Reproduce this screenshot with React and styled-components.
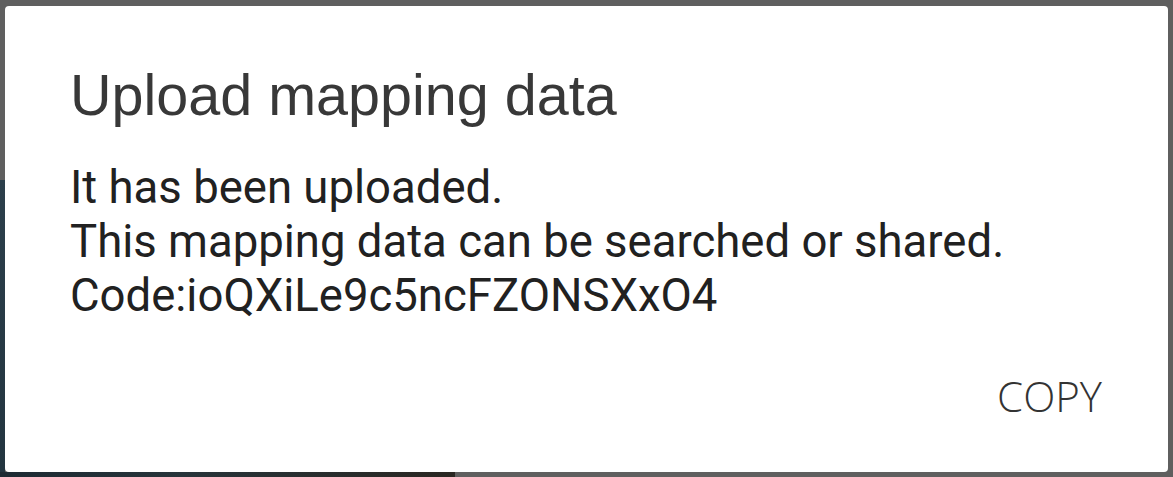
import React from "react";
import styled, { createGlobalStyle } from "styled-components";

const Global = createGlobalStyle`
  html, body { margin: 0; padding: 0; background: #5f5f5f; }
  #root { width: 1173px; height: 477px; }
`;

const Backdrop = styled.div`
  box-sizing: border-box;
  width: 1173px;
  height: 477px;
  padding: 6px 5px 5px 5px;
  background:
    linear-gradient(#2c3f4b, #233540) 0 180px / 5px 292px no-repeat,
    linear-gradient(90deg, #1d2a33, #27343a 40%, #2a2722) 0 472px / 455px 5px no-repeat,
    #5f5f5f;
`;

const Dialog = styled.div`
  box-sizing: border-box;
  height: 466px;
  background: #ffffff;
  border-radius: 4px;
  padding: 61px 66px 0 65px;
  display: flex;
  flex-direction: column;
`;

const Title = styled.h1`
  margin: 0;
  font-family: "Liberation Sans", Arial, sans-serif;
  font-weight: 400;
  font-size: 57.5px;
  line-height: 57.5px;
  color: #383838;
`;

const Body = styled.div`
  margin-top: 36px;
  font-family: Roboto, "Noto Sans", sans-serif;
  font-size: 45.5px;
  line-height: 54px;
  color: #212121;
`;

const Line = styled.div``;

const Actions = styled.div`
  margin-top: 52px;
  display: flex;
  justify-content: flex-end;
`;

const TextButton = styled.button`
  border: none;
  background: transparent;
  padding: 0;
  font-family: "Open Sans", sans-serif;
  font-weight: 300;
  font-size: 42px;
  line-height: 42px;
  color: #333333;
  cursor: pointer;
`;

export default function App() {
  return (
    <>
      <Global />
      <Backdrop>
        <Dialog>
          <Title>Upload mapping data</Title>
          <Body>
            <Line>It has been uploaded.</Line>
            <Line>This mapping data can be searched or shared.</Line>
            <Line>Code:ioQXiLe9c5ncFZONSXxO4</Line>
          </Body>
          <Actions>
            <TextButton>COPY</TextButton>
          </Actions>
        </Dialog>
      </Backdrop>
    </>
  );
}
